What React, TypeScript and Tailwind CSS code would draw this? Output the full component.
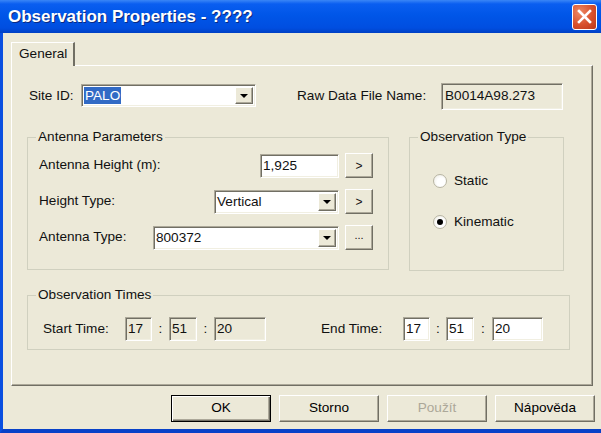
import { ReactNode } from "react";

const sunken =
  "border border-t-[#aca899] border-l-[#aca899] border-r-white border-b-white shadow-[inset_1px_1px_0_#716f64,inset_-1px_-1px_0_#f1efe2]";
const raised =
  "border border-t-white border-l-white border-r-[#716f64] border-b-[#716f64] shadow-[inset_-1px_-1px_0_#aca899]";

function Arrow() {
  return (
    <svg width="8" height="4" viewBox="0 0 8 4">
      <path d="M0 0h8L4 4z" fill="#000" />
    </svg>
  );
}

function Combo({
  value,
  className,
  selected
}: {
  value: string;
  className: string;
  selected?: boolean;
}) {
  return (
    <div className={`flex bg-white ${sunken} ${className}`}>
      <div className="flex flex-1 items-center pl-[2px]">
        <span
          className={
            selected ? "bg-[#316ac5] px-[1px] leading-[17px] text-white" : "leading-[17px]"
          }
        >
          {value}
        </span>
      </div>
      <div
        className={`m-[2px] flex w-[18px] items-center justify-center bg-[#ece9d8] ${raised}`}
      >
        <Arrow />
      </div>
    </div>
  );
}

function SmallButton({ children }: { children: ReactNode }) {
  return (
    <div
      className={`ml-[6px] flex h-[25px] w-[28px] items-center justify-center bg-[#ece9d8] text-[12px] ${raised}`}
    >
      {children}
    </div>
  );
}

function Group({
  title,
  className,
  children
}: {
  title: string;
  className: string;
  children: ReactNode;
}) {
  return (
    <div className={`relative border border-[#d0d0bf] ${className}`}>
      <span className="absolute -top-[9px] left-[8px] bg-[#ece9d8] px-[2px] leading-[16px]">
        {title}
      </span>
      {children}
    </div>
  );
}

function Radio({ label, checked }: { label: string; checked?: boolean }) {
  return (
    <div className="flex h-[20px] items-center">
      <div className="flex h-[14px] w-[14px] items-center justify-center rounded-full border border-[#b8b5a4] bg-[radial-gradient(circle_at_60%_60%,#ffffff_40%,#e8e6dc_100%)]">
        {checked && <div className="h-[6px] w-[6px] rounded-full bg-black" />}
      </div>
      <span className="ml-[7px]">{label}</span>
    </div>
  );
}

function TimeBox({ value, className, disabled }: { value: string; className: string; disabled?: boolean }) {
  return (
    <div
      className={`flex h-[24px] items-start pl-[2px] pt-[2px] leading-[17px] ${
        disabled ? "bg-[#ece9d8]" : "bg-white"
      } ${sunken} ${className}`}
    >
      {value}
    </div>
  );
}

function DialogButton({
  children,
  isDefault,
  disabled
}: {
  children: ReactNode;
  isDefault?: boolean;
  disabled?: boolean;
}) {
  return (
    <div
      className={`flex h-[27px] w-[100px] items-center justify-center bg-[#ece9d8] ${
        isDefault
          ? "border border-black shadow-[inset_1px_1px_0_#fff,inset_-1px_-1px_0_#716f64,inset_-2px_-2px_0_#aca899]"
          : raised
      } ${disabled ? "text-[#aca899]" : "text-black"}`}
    >
      {children}
    </div>
  );
}

export default function App() {
  return (
    <div className="flex h-[433px] w-[601px] flex-col overflow-hidden bg-[#ece9d8] font-['Liberation_Sans',Arial,sans-serif] text-[13.6px] text-[#111]">
      {/* title bar */}
      <div className="flex h-[33px] shrink-0 items-center bg-[linear-gradient(to_bottom,#3a86f6_0%,#0a5ef0_12%,#0056e8_45%,#004ee0_85%,#0040c4_100%)] pl-[8px] pr-[4px]">
        <span className="flex-1 text-[17px] font-bold text-white [text-shadow:1px_1px_0_#0a2a80]">
          Observation Properties - ????
        </span>
        <div className="flex h-[26px] w-[25px] items-center justify-center rounded-[3px] border border-white bg-[radial-gradient(circle_at_30%_30%,#ee8a66_0%,#d8502c_55%,#b9361a_100%)]">
          <svg width="15" height="15" viewBox="0 0 15 15">
            <path d="M2 2l11 11M13 2L2 13" stroke="#fff" strokeWidth="2.6" strokeLinecap="square" />
          </svg>
        </div>
      </div>

      {/* body */}
      <div className="flex flex-1 flex-col border-b-[4px] border-l-[3px] border-b-[#0841c8] border-l-[#0a4fe0] pl-[8px] pt-[9px]">
        {/* tab */}
        <div className="relative z-10 -mb-[1px] flex h-[24px] w-[64px] items-center border-l border-t border-r-2 border-l-white border-t-white border-r-[#716f64] bg-[#ece9d8] pl-[7px]">
          General
        </div>

        {/* panel */}
        <div className="flex h-[321px] w-[582px] flex-col border border-b-[#716f64] border-l-white border-r-[#716f64] border-t-white pt-[17px] shadow-[inset_-1px_-1px_0_#aca899]">
          {/* site row */}
          <div className="flex h-[27px] items-start">
            <span className="ml-[17px] mt-[2px] w-[52px] leading-[22px]">Site ID:</span>
            <Combo value="PALO" selected className="mt-[1px] h-[23px] w-[175px]" />
            <span className="ml-[41px] mt-[2px] w-[144px] leading-[22px]">Raw Data File Name:</span>
            <div className={`h-[27px] w-[122px] pl-[3px] pt-[3px] leading-[17px] ${sunken}`}>
              B0014A98.273
            </div>
          </div>

          {/* groups row */}
          <div className="mt-[27px] flex items-start">
            <Group title="Antenna Parameters" className="ml-[15px] h-[133px] w-[362px]">
              <div className="flex flex-col gap-[11px] pl-[11px] pr-[15px] pt-[15px]">
                <div className="flex items-center">
                  <span className="flex-1">Antenna Height (m):</span>
                  <div className={`h-[24px] w-[79px] bg-white pl-[2px] pt-[2px] leading-[17px] ${sunken}`}>
                    1,925
                  </div>
                  <SmallButton>&gt;</SmallButton>
                </div>
                <div className="flex items-center">
                  <span className="flex-1">Height Type:</span>
                  <Combo value="Vertical" className="h-[24px] w-[125px]" />
                  <SmallButton>&gt;</SmallButton>
                </div>
                <div className="flex items-center">
                  <span className="flex-1">Antenna Type:</span>
                  <Combo value="800372" className="h-[24px] w-[186px]" />
                  <SmallButton>
                    <span className="-mt-[4px] text-[11px]">...</span>
                  </SmallButton>
                </div>
              </div>
            </Group>

            <Group title="Observation Type" className="ml-[20px] h-[134px] w-[155px]">
              <div className="flex flex-col gap-[21px] pl-[23px] pt-[33px]">
                <Radio label="Static" />
                <Radio label="Kinematic" checked />
              </div>
            </Group>
          </div>

          {/* times */}
          <Group title="Observation Times" className="ml-[15px] mt-[24px] h-[55px] w-[543px]">
            <div className="flex items-center pt-[21px]">
              <span className="ml-[15px] w-[82px]">Start Time:</span>
              <TimeBox value="17" disabled className="w-[27px]" />
              <span className="w-[17px] text-center">:</span>
              <TimeBox value="51" disabled className="w-[28px]" />
              <span className="w-[17px] text-center">:</span>
              <TimeBox value="20" disabled className="w-[52px]" />
              <span className="ml-[55px] w-[82px]">End Time:</span>
              <TimeBox value="17" className="w-[27px]" />
              <span className="w-[16px] text-center">:</span>
              <TimeBox value="51" className="w-[28px]" />
              <span className="w-[18px] text-center">:</span>
              <TimeBox value="20" className="w-[51px]" />
            </div>
          </Group>
        </div>

        {/* buttons */}
        <div className="ml-[160px] mt-[9px] flex gap-[8px]">
          <DialogButton isDefault>OK</DialogButton>
          <DialogButton>Storno</DialogButton>
          <DialogButton disabled>Použít</DialogButton>
          <DialogButton>Nápověda</DialogButton>
        </div>
      </div>
    </div>
  );
}
